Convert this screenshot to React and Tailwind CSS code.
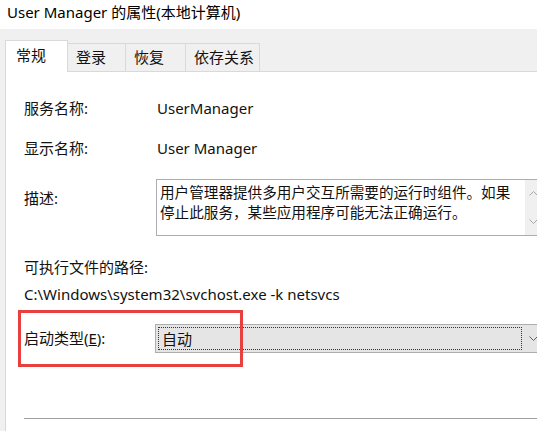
import React from "react";

const font = { fontFamily: '"Noto Sans", "Noto Sans CJK SC", sans-serif' };

function Chevron({ up = false, className = "" }) {
  return (
    <svg width="9" height="6" viewBox="0 0 9 6" className={className}>
      <path
        d={up ? "M0.5 5.5 L4.5 1.5 L8.5 5.5" : "M0.5 0.5 L4.5 4.5 L8.5 0.5"}
        fill="none"
        stroke="currentColor"
        strokeWidth="1"
      />
    </svg>
  );
}

const tabs = [
  { label: "登录", w: "w-[58px]" },
  { label: "恢复", w: "w-[60px]" },
  { label: "依存关系", w: "w-[74px]" },
];

export default function App() {
  return (
    <div className="relative w-[537px] h-[431px] overflow-hidden bg-white text-[15px] text-[#111]" style={font}>
      {/* window title */}
      <div className="h-[29px] bg-white pl-[7px] pt-[1px] leading-[22px] text-[15px] text-black">
        User Manager 的属性(本地计算机)
      </div>

      <div className="bg-[#f0f0f0] pl-[5px] pt-[11px] h-[402px] flex flex-col">
        {/* tabs */}
        <div className="flex items-end h-[31px]">
          <div className="relative z-10 -mb-px h-[32px] w-[63px] bg-white border border-b-0 border-[#d9d9d9] pl-[10px] leading-[29px]">
            常规
          </div>
          {tabs.map((t) => (
            <div
              key={t.label}
              className={`${t.w} h-[28px] border border-l-0 border-b-0 border-[#d9d9d9] bg-[#f0f0f0] pl-[8px] leading-[27px]`}
            >
              {t.label}
            </div>
          ))}
        </div>

        {/* panel */}
        <div className="flex-1 bg-white border-l border-t border-[#d9d9d9] pl-[18px] pt-[26px]">
          <div className="flex h-[20px] items-center">
            <span className="w-[133px] shrink-0">服务名称:</span>
            <span>UserManager</span>
          </div>
          <div className="flex h-[20px] items-center mt-[20px]">
            <span className="w-[133px] shrink-0">显示名称:</span>
            <span>User Manager</span>
          </div>

          <div className="flex mt-[21px]">
            <span className="w-[132px] shrink-0 pt-[9px] leading-[20px]">描述:</span>
            <div className="flex shrink-0 w-[400px] h-[57px] border border-[#abadb3] bg-white">
              <div className="flex-1 pl-[3px] pt-[2px] text-[14.6px] leading-[20px]">
                用户管理器提供多用户交互所需要的运行时组件。如果
                <br />
                停止此服务，某些应用程序可能无法正确运行。
              </div>
              <div className="w-[17px] shrink-0 bg-[#f0f0f0] flex flex-col items-center justify-between py-[10px] text-[#a8a8a8] mr-[13px]">
                <Chevron up />
                <Chevron />
              </div>
            </div>
          </div>

          <div className="h-[20px] flex items-center mt-[21px]">可执行文件的路径:</div>
          <div className="h-[20px] flex items-center mt-[7px]">C:\Windows\system32\svchost.exe -k netsvcs</div>

          <div className="flex items-center mt-[20px]">
            <span className="w-[131px] shrink-0">
              启动类型(<span className="underline">E</span>):
            </span>
            <div className="flex shrink-0 items-center w-[400px] h-[29px] border border-[#adadad] bg-[#e5e5e5] p-[2px]">
              <div className="w-[364px] shrink-0 h-full border border-dotted border-[#333] pl-[3px] leading-[22px]">自动</div>
              <Chevron className="ml-[7px] text-[#606060]" />
            </div>
          </div>

          <div className="mt-[65px] h-px bg-[#a0a0a0] mr-[-20px]" />
        </div>
      </div>

      {/* annotation box */}
      <div className="absolute left-[18px] top-[310px] w-[225px] h-[57px] border-[3px] border-[#e8403f]" />
    </div>
  );
}
